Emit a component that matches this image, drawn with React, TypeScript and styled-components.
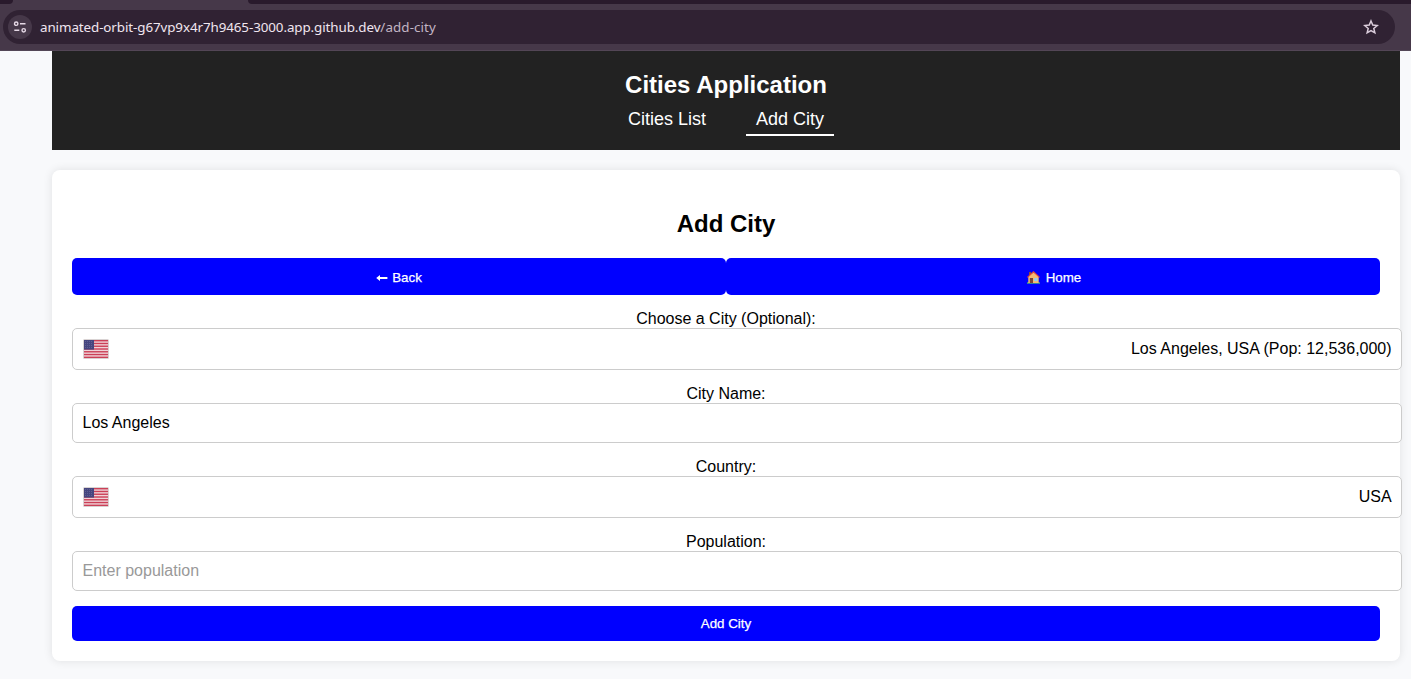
import React from "react";
import styled, { createGlobalStyle } from "styled-components";

const GlobalStyle = createGlobalStyle`
  body {
    margin: 0;
    background: #f8f9fb;
    font-family: "Liberation Sans", Arial, sans-serif;
    font-size: 16px;
    line-height: 18px;
    color: #000;
  }
`;

const TabStrip = styled.div`
  display: flex;
  justify-content: space-between;
  height: 4px;
  background: #463849;
`;

const TabEdge = styled.div<{ $side: "left" | "right" }>`
  width: ${(p) => (p.$side === "left" ? "13px" : "1163px")};
  background: #291a2c;
  border-radius: ${(p) => (p.$side === "left" ? "0 0 8px 0" : "0 0 0 8px")};
`;

const Toolbar = styled.div`
  box-sizing: border-box;
  height: 47px;
  padding: 6px 16px 0 3px;
  background: #463849;
  border-bottom: 1px solid #534656;
`;

const AddressBar = styled.div`
  box-sizing: border-box;
  display: flex;
  align-items: center;
  height: 34px;
  padding: 0 16px 0 5px;
  border-radius: 17px;
  background: #302233;
`;

const SiteInfo = styled.div`
  display: flex;
  align-items: center;
  justify-content: center;
  width: 24px;
  height: 24px;
  border-radius: 50%;
  background: #463849;
`;

const Url = styled.div`
  flex: 1;
  margin-left: 8px;
  font: 13.4px/18px "Noto Sans", "Open Sans", sans-serif;
  color: #f0e6f0;
`;

const UrlHost = styled.span`
  display: inline-block;
  letter-spacing: -0.095px;
`;

const UrlPath = styled.span`
  color: #c2b5c4;
  letter-spacing: 0.08px;
`;

const Page = styled.div`
  box-sizing: border-box;
  height: 628px;
  padding: 0 11px 0 52px;
`;

const Header = styled.header`
  box-sizing: border-box;
  height: 99px;
  padding-top: 20px;
  background: #222;
  color: #fff;
  text-align: center;
`;

const Title = styled.h1`
  margin: 0;
  font-size: 24px;
  line-height: 28px;
`;

const Nav = styled.nav`
  display: flex;
  justify-content: center;
  gap: 30px;
  margin-top: 5px;
`;

const NavLink = styled.a<{ $active?: boolean }>`
  padding: 5px 10px;
  font-size: 18px;
  line-height: 20px;
  border-bottom: 2px solid ${(p) => (p.$active ? "#fff" : "transparent")};
`;

const Card = styled.main`
  box-sizing: border-box;
  height: 491px;
  margin-top: 20px;
  padding: 20px;
  border-radius: 8px;
  background: #fff;
  box-shadow: 0 0 10px rgba(0, 0, 0, 0.1);
  text-align: center;
`;

const Heading = styled.h2`
  margin: 20px 0;
  font-size: 24px;
  line-height: 28px;
`;

const ButtonRow = styled.div`
  display: flex;
  margin-bottom: 15px;
`;

const Button = styled.button<{ $tall?: boolean }>`
  display: flex;
  align-items: center;
  justify-content: center;
  gap: 4px;
  width: 100%;
  height: ${(p) => (p.$tall ? 37 : 35)}px;
  padding: ${(p) => (p.$tall ? "2px 0 0" : "0")};
  border: 0;
  border-radius: 5px;
  background: #00f;
  color: #fff;
  font: 13.333px/15px "Liberation Sans", Arial, sans-serif;
  -webkit-text-stroke: 0.25px #fff;
`;

const Field = styled.div`
  margin-bottom: 15px;
`;

const Label = styled.label`
  display: block;
`;

const TextInput = styled.input`
  display: block;
  width: 100%;
  height: 18px;
  padding: 10px 10.5px 10px 9.5px;
  border: 1px solid #ccc;
  border-radius: 5px;
  background: #fff;
  font: 16px/18px "Liberation Sans", Arial, sans-serif;
  color: #000;
  &::placeholder {
    color: #999;
  }
`;

const SelectBox = styled.div`
  display: flex;
  align-items: center;
  justify-content: space-between;
  width: 100%;
  height: 20px;
  padding: 10px;
  border: 1px solid #ccc;
  border-radius: 5px;
  background: #fff;
`;

const SelectValue = styled.span`
  margin-right: -0.6px;
`;

const SiteIcon = () => (
  <svg width="14" height="14" viewBox="0 0 14 14" fill="none" stroke="#e6d9e6" strokeWidth="1.4">
    <circle cx="3.2" cy="3.7" r="1.7" />
    <path d="M7 3.7h5.5M1.3 10.3h5" />
    <circle cx="10.7" cy="10.3" r="1.7" />
  </svg>
);

const StarIcon = () => (
  <svg width="16" height="16" viewBox="0 0 16 16" fill="none" stroke="#dccedc" strokeWidth="1.5">
    <path d="M8 2l1.75 4.1 4.45.4-3.4 2.9 1.05 4.4L8 11.5l-3.85 2.3L5.2 9.4 1.8 6.5l4.45-.4z" />
  </svg>
);

const ArrowIcon = () => (
  <svg width="12" height="8" viewBox="0 0 12 8" fill="#fff">
    <path d="M.2 4L4 1V2.9h7.4v2.2H4V7z" />
  </svg>
);

const HouseIcon = () => (
  <svg width="15" height="15" viewBox="0 0 15 15">
    <path d="M1 12.2h13v1.6H1z" fill="#3f9f83" />
    <path d="M3 2h2v4H3z" fill="#8b4a3a" />
    <path d="M2.3 6.5L7.5 2l5.2 4.5V13H2.3z" fill="#f5bb72" />
    <path d="M3.8 8h3.2v5H3.8z" fill="#7d4533" />
    <path d="M8.2 8h3.2v3.2H8.2z" fill="#8fd0f5" />
    <path d="M1.4 7.4l6.1-5.6 6.1 5.6" fill="none" stroke="#e0433f" strokeWidth="1.2" />
  </svg>
);

const HomeLabel = styled.span`
  margin: 0 -1px 0 1px;
`;

const stripes = Array.from({ length: 7 }, (_, i) => i);

const FlagIcon = () => (
  <svg width="26" height="20" viewBox="0 0 26 20">
    <rect width="26" height="20" rx="1.5" fill="#d9d3d3" />
    <rect x="1" y="1" width="24" height="18" fill="#f0d3d8" />
    {stripes.map((i) => (
      <rect key={i} x="1" y={1 + i * 2.77} width="24" height="1.4" fill="#cb4057" />
    ))}
    <rect x="1" y="1" width="10" height="9.6" fill="#46467f" />
    {[2.5, 4.5, 6.5, 8.5].map((y) => (
      <path key={y} d={`M2 ${y}h8`} stroke="#7474a2" strokeWidth=".7" strokeDasharray=".8 1.2" />
    ))}
  </svg>
);

export default function App() {
  return (
    <>
      <GlobalStyle />
      <TabStrip>
        <TabEdge $side="left" />
        <TabEdge $side="right" />
      </TabStrip>
      <Toolbar>
        <AddressBar>
          <SiteInfo>
            <SiteIcon />
          </SiteInfo>
          <Url>
            <UrlHost>animated-orbit-g67vp9x4r7h9465-3000.app.github.dev</UrlHost>
            <UrlPath>/add-city</UrlPath>
          </Url>
          <StarIcon />
        </AddressBar>
      </Toolbar>
      <Page>
        <Header>
          <Title>Cities Application</Title>
          <Nav>
            <NavLink>Cities List</NavLink>
            <NavLink $active>Add City</NavLink>
          </Nav>
        </Header>
        <Card>
          <Heading>Add City</Heading>
          <ButtonRow>
            <Button $tall>
              <ArrowIcon />
              Back
            </Button>
            <Button $tall>
              <HouseIcon />
              <HomeLabel>Home</HomeLabel>
            </Button>
          </ButtonRow>
          <Field>
            <Label>Choose a City (Optional):</Label>
            <SelectBox>
              <FlagIcon />
              <SelectValue>Los Angeles, USA (Pop: 12,536,000)</SelectValue>
            </SelectBox>
          </Field>
          <Field>
            <Label>City Name:</Label>
            <TextInput defaultValue="Los Angeles" />
          </Field>
          <Field>
            <Label>Country:</Label>
            <SelectBox>
              <FlagIcon />
              <SelectValue>USA</SelectValue>
            </SelectBox>
          </Field>
          <Field>
            <Label>Population:</Label>
            <TextInput placeholder="Enter population" />
          </Field>
          <Button>Add City</Button>
        </Card>
      </Page>
    </>
  );
}
